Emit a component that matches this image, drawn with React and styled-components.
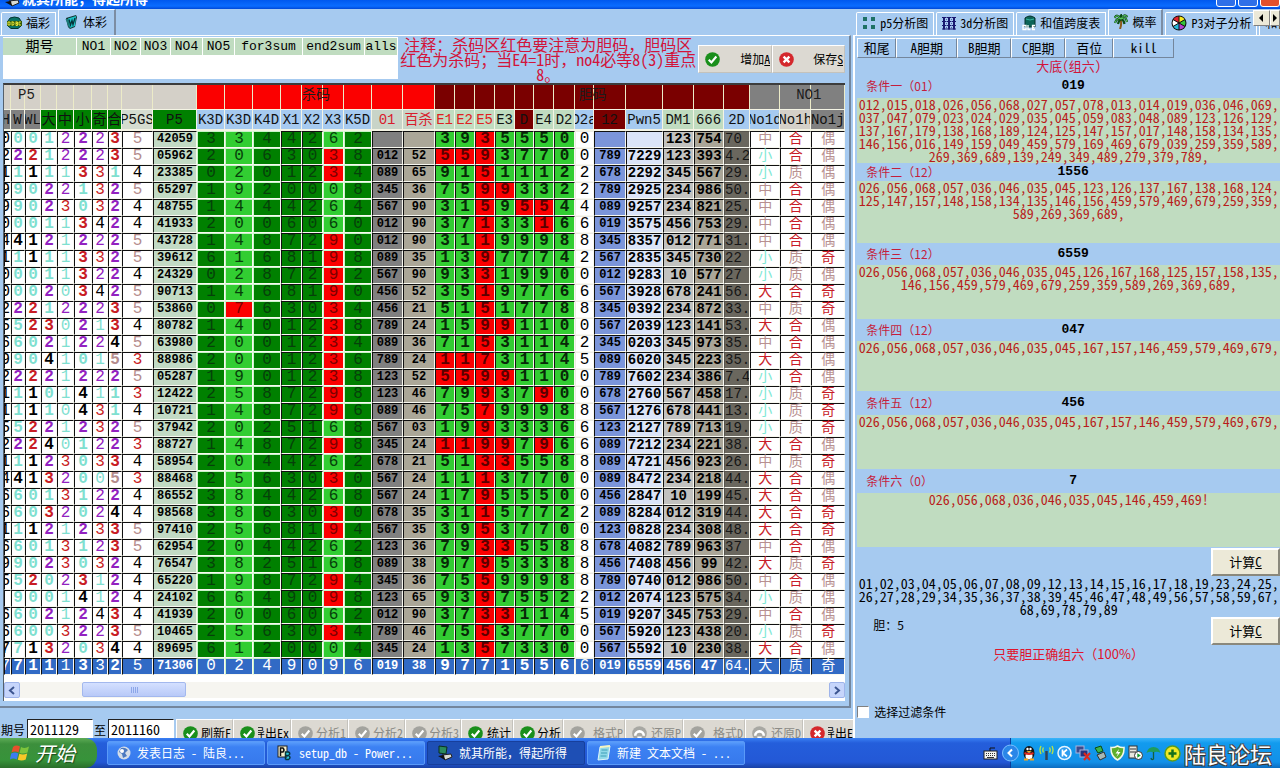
import React from 'react';
import styled, { createGlobalStyle, css } from 'styled-components';

const Global = createGlobalStyle`
  *, *::before, *::after { box-sizing: border-box; }
  body { margin: 0; background: #a6caf0; }
  button, input { font: inherit; color: inherit; margin: 0; padding: 0; border-radius: 0; }
`;

const mono = '"Liberation Mono", "Noto Sans CJK SC", monospace';
const song = '"Noto Sans CJK SC", "Noto Sans", sans-serif';

const Shell = styled.div`
  min-height: 100vh;
  display: flex;
  flex-direction: column;
  overflow: hidden;
  background: #a6caf0;
  color: #000;
  font: 12px/16px ${song};
  font-feature-settings: "hwid";
`;
const Full = styled.span`
  font-feature-settings: normal;
`;

/* ---------- title bar ---------- */
const TitleBar = styled.header`
  height: 9px;
  flex: none;
  display: flex;
  align-items: flex-end;
  gap: 2px;
  padding: 0 0 2px 4px;
  overflow: hidden;
  background: linear-gradient(#0058ee, #0a6cff 6px, #0048d8);
  color: #fff;
`;
const Title = styled.h1`
  margin: 0;
  flex: 1;
  font-size: 14px;
  line-height: 18px;
  font-weight: 700;
  font-feature-settings: normal;
`;
const WinButton = styled.button`
  flex: none;
  width: 20px;
  height: 20px;
  border: 1px solid #fff;
  border-radius: 3px;
  background: ${(p) => (p.$close ? '#e2502c' : '#2f6fe8')};
`;

/* ---------- layout ---------- */
const Main = styled.main`
  flex: 1;
  display: grid;
  grid-template-columns: minmax(0, 2fr) minmax(0, 1fr);
`;
const Left = styled.section`
  display: flex;
  flex-direction: column;
  min-width: 0;
`;
const Right = styled.section`
  display: flex;
  flex-direction: column;
  min-width: 0;
`;
const TabRow = styled.div`
  height: 26px;
  flex: none;
  display: flex;
  align-items: flex-end;
  gap: 2px;
  padding-left: ${(p) => p.$inset || 1}px;
  overflow: hidden;
`;
const Tab = styled.button`
  height: ${(p) => (p.$active ? 26 : 23)}px;
  flex: none;
  display: flex;
  align-items: center;
  gap: 4px;
  padding: 0 ${(p) => p.$end || 5}px 2px 5px;
  background: #a6caf0;
  border: solid #fff;
  border-width: 1px 1px 0 1px;
  border-top-left-radius: 2px;
  white-space: nowrap;
  ${(p) => p.$active && css`border-right: 2px solid #7c8da3;`}
`;
const Page = styled.div`
  flex: 1;
  display: flex;
  flex-direction: column;
  margin-right: 2px;
  padding: 1px 4px 5px 3px;
  border-top: 1px solid #fff;
  border-right: 2px solid #74869c;
  border-bottom: 2px solid #74869c;
`;

/* ---------- top strip ---------- */
const TopStrip = styled.div`
  height: 46px;
  display: flex;
`;
const SumTable = styled.table`
  width: 395px;
  height: 42px;
  table-layout: fixed;
  border-collapse: separate;
  border-spacing: 0;
  background: #fff;
  font: 13px/16px ${mono};
  th {
    height: 19px;
    padding: 0;
    font-weight: 400;
    background: #c0dcc0;
    border: solid #fff;
    border-width: 1px 1px 1px 0;
    overflow: hidden;
    white-space: nowrap;
  }
  th:first-child { font-size: 14px; }
  td { padding: 0; }
`;
const Note = styled.p`
  flex: 1;
  margin: 0;
  text-align: center;
  white-space: nowrap;
  font-size: 16px;
  line-height: 15px;
  color: #d2143a;
`;
const ActionRow = styled.div`
  display: flex;
  padding-top: 8px;
`;
const ToolButton = styled.button`
  width: ${(p) => p.$w}px;
  height: 28px;
  flex: none;
  display: flex;
  align-items: center;
  gap: 3px;
  padding: 0 1px 0 6px;
  background: #dcd9d2;
  border: 1px solid;
  border-color: #fff #c4c2bc #c4c2bc #fff;
  color: ${(p) => (p.disabled ? '#8b8b86' : '#000')};
  svg { flex: none; }
`;
const ToolLabel = styled.span`
  flex: 1;
  min-width: 0;
  display: flex;
  justify-content: flex-end;
  overflow: hidden;
  white-space: nowrap;
`;

/* ---------- data grid ---------- */
const Frame = styled.div`
  flex: 1;
  overflow: hidden;
  border-left: 1px solid #55606c;
  border-top: 2px solid #3c3c3c;
  background: #fff;
`;
const Grid = styled.table`
  width: 841px;
  table-layout: fixed;
  border-collapse: separate;
  border-spacing: 0;
  font: 14px/14px ${mono};
`;
const GroupHead = styled.th`
  height: 24px;
  padding: 0 0 4px ${(p) => p.$indent || 0}px;
  font-weight: 400;
  text-align: ${(p) => (p.$indent ? 'left' : 'center')};
  color: #1c1c1c;
  background-color: ${(p) => p.$bg};
  background-image: ${(p) => p.$lines.map(() => 'linear-gradient(#ecebc8, #ecebc8)').join(', ')};
  background-position: ${(p) => p.$lines.map((x) => `${x}px 0`).join(', ')};
  background-size: 1px 100%;
  background-repeat: no-repeat;
`;
const Clip = styled.span`
  display: flex;
  justify-content: ${(p) => p.$at || 'center'};
  overflow-x: clip;
  white-space: nowrap;
`;
const ColHead = styled.th`
  height: 22px;
  padding: 0;
  font-size: 14px;
  line-height: 18px;
  font-weight: 400;
  border: solid #f4f4e4;
  border-width: 1px 1px 2px 0;
  background: ${(p) => p.$bg};
  color: ${(p) => p.$fg};
`;
const Cell = styled.td`
  height: 17px;
  padding: 0;
  line-height: 15px;
  border: 1px solid #fff;
  border-color: ${(p) => (p.$soft ? '#c8f4c8' : p.$edge || '#101010')} #f8f8f0 #f8f8f0
    ${(p) => (p.$soft ? '#c8f4c8' : p.$edge || '#101010')};
  background: ${(p) => p.$bg};
  color: ${(p) => p.$fg};
  font-size: ${(p) => p.$size}px;
  font-weight: ${(p) => (p.$bold ? 700 : 400)};
`;
const ScrollBar = styled.div`
  height: 16px;
  margin-top: 7px;
  display: flex;
  background: #f6f5f0;
`;
const ScrollArrow = styled.button`
  width: 16px;
  display: grid;
  place-items: center;
  border: 1px solid #9fb4ea;
  border-radius: 2px;
  background: #c6d5fb;
`;
const Track = styled.div`
  flex: 1;
  padding-left: 62px;
`;
const Thumb = styled.div`
  width: 104px;
  height: 15px;
  display: flex;
  justify-content: center;
  align-items: center;
  gap: 1px;
  background: linear-gradient(#d4e0ff, #b8c9f8);
  border: 1px solid #a3b8ee;
  border-radius: 2px;
  i { width: 1px; height: 6px; background: #8ca6e8; }
`;

/* ---------- bottom toolbar ---------- */
const BottomBar = styled.form`
  height: 19px;
  margin-top: 11px;
  display: flex;
  align-items: flex-start;
  overflow: hidden;
  label { padding: 3px 2px 0 1px; flex: none; }
`;
const IssueInput = styled.input`
  width: 66px;
  height: 24px;
  flex: none;
  padding: 0 0 4px 2px;
  border: 1px solid;
  border-color: #222 #fff #fff #222;
  background: #fff;
  font-size: 14px;
  font-feature-settings: "hwid";
`;
const Tools = styled.div`
  display: flex;
  margin-left: 2px;
`;

/* ---------- right pane ---------- */
const RightPage = styled.div`
  flex: 1;
  display: flex;
  flex-direction: column;
  padding: 2px 0 0 2px;
  border-left: 2px solid #fff;
  border-top: 1px solid #fff;
`;
const TabStrip = styled.div`
  position: relative;
`;
const Spinner = styled.div`
  position: absolute;
  right: 0;
  top: 1px;
  display: flex;
`;
const SpinButton = styled.button`
  width: ${(p) => p.$w}px;
  height: 16px;
  display: grid;
  place-items: center;
  border: 1px solid;
  border-color: #fff #808080 #808080 #fff;
  background: #ece9d8;
`;
const SubTabs = styled.nav`
  display: flex;
  height: 20px;
`;
const SubTab = styled.button`
  width: ${(p) => p.$w}px;
  flex: none;
  font-size: 13px;
  line-height: 16px;
  background: #a6caf0;
  border: 1px solid;
  border-color: #fff #74869c #74869c #fff;
`;
const Caption = styled.h2`
  margin: 0;
  height: 16px;
  text-align: center;
  font-size: 13px;
  line-height: 16px;
  font-weight: 400;
  color: #d2143a;
`;
const CondHead = styled.h3`
  height: ${(p) => p.$h}px;
  margin: 0;
  padding-left: 9px;
  display: grid;
  grid-template-columns: 1fr auto 1fr;
  align-items: center;
  font-size: 12px;
  line-height: 16px;
  font-weight: 400;
  color: #c41e3c;
  b { font: 700 13px/14px ${mono}; color: #000; }
`;
const CondBody = styled.p`
  height: ${(p) => p.$h}px;
  margin: 0;
  background: #c0dcc0;
  text-align: center;
  font-size: 14px;
  line-height: 13px;
  color: #b81c1c;
`;
const CalcRow = styled.div`
  display: flex;
  justify-content: space-between;
  align-items: flex-start;
  padding: 1px 0 1px 16px;
`;
const CalcButton = styled.button`
  width: 69px;
  height: 28px;
  margin-left: auto;
  font-size: 13px;
  line-height: 16px;
  background: #ece9d8;
  border: 2px solid;
  border-color: #fff #8a887c #8a887c #fff;
`;
const PairList = styled.p`
  margin: 0;
  text-align: center;
  font-size: 14px;
  line-height: 13px;
`;
const Hint = styled.p`
  margin: 0;
  text-align: center;
  font-size: 13px;
  line-height: 16px;
  font-feature-settings: normal;
  color: #e0142c;
`;
const CheckLabel = styled.label`
  display: flex;
  align-items: center;
  gap: 5px;
  margin-top: 42px;
`;
const Check = styled.input`
  appearance: none;
  width: 12px;
  height: 12px;
  border: 1px solid;
  border-color: #808080 #fff #fff #808080;
  background: #fff;
`;

/* ---------- taskbar ---------- */
const TaskBar = styled.footer`
  height: 30px;
  flex: none;
  display: flex;
  align-items: stretch;
  background: linear-gradient(#3a80f4, #245edb 5px, #2358d6 24px, #1941a5);
  color: #fff;
`;
const Start = styled.button`
  width: 97px;
  flex: none;
  display: flex;
  align-items: center;
  gap: 5px;
  padding-left: 10px;
  margin-right: 10px;
  border: 0;
  border-radius: 0 12px 12px 0;
  background: linear-gradient(#5eac56, #3c8f3c 6px, #37933a 22px, #2a6e2a);
  font-size: 20px;
  line-height: 24px;
  font-style: italic;
  text-shadow: 1px 1px 1px #1c4a1c;
`;
const Task = styled.button`
  flex: 0 1 158px;
  min-width: 0;
  height: 24px;
  display: flex;
  align-items: center;
  gap: 6px;
  margin: 3px 2px 0 0;
  padding-left: 9px;
  border: 1px solid ${(p) => (p.$active ? '#173f9c' : '#5a9af8')};
  border-radius: 2px;
  background: ${(p) => (p.$active ? '#1e4fb5' : 'linear-gradient(#5a9dfb, #3c81f3 5px, #3779ec)')};
  white-space: nowrap;
  overflow: hidden;
  svg { flex: none; }
`;
const InputMethod = styled.div`
  margin-left: auto;
  padding: 0 12px 0 0;
  display: flex;
  align-items: center;
`;
const Tray = styled.div`
  display: flex;
  align-items: center;
  gap: 3px;
  padding-right: 8px;
  border-left: 1px solid #0a3c9a;
  background: linear-gradient(#3cb4fa, #129bee 5px, #1290e8 24px, #0c6cc0);
  svg { flex: none; }
  svg:first-child { margin-left: -9px; }
`;
const Watermark = styled.strong`
  font-size: 22px;
  line-height: 28px;
  font-weight: 400;
  white-space: nowrap;
  color: #fff;
  text-shadow: 1px 1px 0 #333, -1px -1px 0 #555, 1px -1px 0 #444, -1px 1px 0 #444;
`;

/* ---------- icons ---------- */
const OkIcon = ({ off }) => (
  <svg width="15" height="15" viewBox="0 0 14 14">
    <circle cx="7" cy="7" r="6.8" fill={off ? '#a3a39e' : '#1a8f1c'} />
    <path d="M3.5 7.2 L6 9.8 L10.6 4.2" fill="none" stroke="#fff" strokeWidth="2" />
  </svg>
);
const NoIcon = () => (
  <svg width="15" height="15" viewBox="0 0 14 14">
    <circle cx="7" cy="7" r="6.8" fill="#d4282c" />
    <path d="M4.300 4.300 L9.700 9.700 M9.700 4.300 L4.300 9.700" stroke="#fff" strokeWidth="2.2" />
  </svg>
);
const UndoIcon = () => (
  <svg width="15" height="15" viewBox="0 0 14 14">
    <circle cx="7" cy="7" r="6.8" fill="#a8a8a3" />
    <path d="M3 9 A4 4 0 0 1 11 9 M5 11 L9 11" fill="none" stroke="#fff" strokeWidth="2.4" />
  </svg>
);
const OdbcIcon = () => (
  <svg width="15" height="14" viewBox="0 0 15 14">
    <path d="M3 2 Q7.5 0 12 2 L14 5 V10 L11 12.500 H4 L1 10 V5 Z" fill="#0a7466" stroke="#02352f" />
    <rect x="0" y="5" width="15" height="5" fill="#31590e" />
    <path d="M1 6h2v3h-2z M5 5.500v4 M5 6h1.500l.5 1.500-.5 1.500h-1.500 M9 5.500v4 M9 6h1.500v1.500h-1.500 M10.500 7.500v2h-1.500 M14 6h-2v3h2" fill="none" stroke="#f4f03c" strokeWidth=".9" />
  </svg>
);
const BookIcon = () => (
  <svg width="15" height="16" viewBox="0 0 15 16">
    <path d="M2 4 L12 1 L13 3 L11 13 L6 15 L4 13 Z" fill="#11332f" />
    <path d="M1.500 5 L4 5 L6 14 L4.500 13 Z" fill="#1d7c78" />
    <path d="M4 4.500 L12 2 L11 12 L6 14 Z" fill="#1cc4c8" />
    <path d="M5 5.500 L6.500 11 L8 6.500 L9 10.500 L11 4" fill="none" stroke="#04343a" strokeWidth="1.300" />
  </svg>
);
const SquaresIcon = () => (
  <svg width="14" height="14" viewBox="0 0 14 14">
    <g fill="#1e7064"><rect x="1" y="1" width="4" height="4" /><rect x="9" y="1" width="4" height="4" /><rect x="1" y="9" width="4" height="4" /><rect x="9" y="9" width="4" height="4" /></g>
  </svg>
);
const MatrixIcon = () => (
  <svg width="14" height="14" viewBox="0 0 14 14">
    <path d="M0 1.500h14M0 5.500h14M0 9.500h14M0 13h14" stroke="#191970" />
    <path d="M2 1v12.500M7 1v12.500M12 1v12.500" stroke="#191970" strokeWidth="2" />
    <path d="M4.500 1v12M9.500 1v12" stroke="#5c66b4" strokeDasharray="1 1" />
  </svg>
);
const OleIcon = () => (
  <svg width="14" height="16" viewBox="0 0 14 16">
    <path d="M3 3 Q8 -1 13 3 V12 H3 Z" fill="#0d6458" stroke="#04302b" />
    <path d="M4 4 Q8 6 12 4" fill="none" stroke="#38b8a4" />
    <path d="M1 10.500h3v4h-3z M6 10v4.500h2.500 M13 10.500h-2.500v4h2.500 M10.500 12.500h2" fill="none" stroke="#fff" strokeWidth="1.300" />
  </svg>
);
const PalmIcon = () => (
  <svg width="14" height="15" viewBox="0 0 14 15">
    <path d="M6.500 5 Q8 10 6 15" fill="none" stroke="#8a5a1c" strokeWidth="2" />
    <path d="M7 5 Q3 -1 0.500 4 M7 5 Q3 3 1 9 M7 5 Q5 6 4 10 M7 5 Q10 -1 13.500 3 M7 5 Q12 2 13 8 M7 5 Q10 6 10.500 10 M7 5 Q6 1 8 1" fill="none" stroke="#0b4c14" strokeWidth="2.200" />
    <path d="M7 5 Q3 -1 0.500 4 M7 5 Q3 3 1 9 M7 5 Q10 -1 13.500 3 M7 5 Q12 2 13 8" fill="none" stroke="#5cc864" />
  </svg>
);
const WheelIcon = () => (
  <svg width="16" height="16" viewBox="0 0 16 16">
    <circle cx="8" cy="8" r="7.500" fill="#111" />
    <path d="M8 8 V1.500 A6.500 6.500 0 0 1 13.600 4.800 Z" fill="#f6e91c" />
    <path d="M8 8 L13.600 4.800 A6.500 6.500 0 0 1 13.600 11.200 Z" fill="#35c23a" />
    <path d="M8 8 L13.600 11.200 A6.500 6.500 0 0 1 8 14.500 Z" fill="#b43cd0" />
    <path d="M8 8 V14.500 A6.500 6.500 0 0 1 2.400 11.200 Z" fill="#27b8d8" />
    <path d="M8 8 L2.400 11.200 A6.500 6.500 0 0 1 2.400 4.800 Z" fill="#fff" />
    <path d="M8 8 L2.400 4.800 A6.500 6.500 0 0 1 8 1.500 Z" fill="#e4202c" />
    <path d="M8 1V15M2 4.500L14 11.500M14 4.500L2 11.500" stroke="#111" />
  </svg>
);
const Chevron = ({ d }) => (
  <svg width="8" height="9" viewBox="0 0 8 9"><path d={d} fill="none" stroke="#3c5590" strokeWidth="2" /></svg>
);
const Triangle = ({ d }) => (
  <svg width="5" height="8" viewBox="0 0 5 8"><path d={d} fill="#000" /></svg>
);
const WindowsFlag = () => (
  <svg width="20" height="18" viewBox="0 0 20 18">
    <path d="M3 3 Q6 0.500 10 2.500 L8.500 8.500 Q5 6.500 1.500 8.500 Z" fill="#e8502c" />
    <path d="M11 3 Q15 5 19 2.500 L17.500 8.500 Q13 10.500 9.500 8.700 Z" fill="#7cc43c" />
    <path d="M1.200 9.500 Q5 7.500 8.300 9.500 L6.800 15.500 Q3 13.500 -0.200 15.500 Z" fill="#3c7cf0" />
    <path d="M9.300 9.800 Q13 11.500 17.200 9.500 L15.700 15.500 Q12 17.500 7.800 15.800 Z" fill="#f8c828" />
  </svg>
);
const GlobeIcon = () => (
  <svg width="14" height="14" viewBox="0 0 14 14">
    <circle cx="7" cy="7" r="6.500" fill="#d4dde8" /><path d="M4 2 Q8 1 11 4 L8 7 L10 10 L6 12 L5 8 L2 6 Z" fill="#4b79c0" /><circle cx="5" cy="5" r="2" fill="#fff" />
  </svg>
);
const PbIcon = () => (
  <svg width="16" height="16" viewBox="0 0 16 16">
    <rect x="1" y="1" width="9" height="11" fill="#f4f0d0" stroke="#222" />
    <path d="M3.500 11V3h2.500q2 2 0 4h-2.500" fill="none" stroke="#111" strokeWidth="1.500" />
    <path d="M8.500 14.500V7h3q2.500 1.500 0 3.500h-3 M11.500 10.500q3 2 0 4h-3" fill="#2cc8d8" stroke="#06363c" strokeWidth="1.500" />
  </svg>
);
const AppIcon = () => (
  <svg width="16" height="16" viewBox="0 0 16 16">
    <path d="M2 1 L10 2 L9 9 L2 8 Z" fill="#2a8a5c" stroke="#0b2f20" /><path d="M5 10 L14 9 L15 12 L8 15 Z" fill="#d8dcd4" stroke="#222" /><path d="M1 11 L7 10 L8 15 Z" fill="#111" />
  </svg>
);
const NoteIcon = () => (
  <svg width="14" height="16" viewBox="0 0 14 16">
    <path d="M3 2 L13 1 L11 14 L1 15 Z" fill="#8fd8e8" stroke="#dff6fa" /><path d="M4.500 5h6M4 8h6M3.500 11h6" stroke="#3f9fb8" /><path d="M3 2 L13 1" stroke="#f4f4c0" strokeWidth="2" />
  </svg>
);
const KeyboardIcon = () => (
  <svg width="15" height="16" viewBox="0 0 15 16">
    <rect x="1" y="6" width="13" height="8" fill="#f4f4f0" stroke="#222" /><path d="M3 8.500h9M3 10.500h9" stroke="#333" strokeDasharray="1 1" /><path d="M4 12.500h7" stroke="#333" /><path d="M7 6V3h5" fill="none" stroke="#111" />
  </svg>
);
const BackIcon = () => (
  <svg width="17" height="18" viewBox="0 0 17 18">
    <circle cx="8.500" cy="9" r="8" fill="#2a86e8" stroke="#7cc0ff" /><path d="M10 5.500 L6.500 9 L10 12.500" fill="none" stroke="#fff" strokeWidth="2" />
  </svg>
);
const PenguinIcon = () => (
  <svg width="14" height="16" viewBox="0 0 14 16">
    <ellipse cx="7" cy="8" rx="5.500" ry="7" fill="#151515" /><ellipse cx="7" cy="11" rx="3.500" ry="3.500" fill="#fff" /><circle cx="5.500" cy="4" r="1.200" fill="#fff" /><circle cx="8.500" cy="4" r="1.200" fill="#fff" /><path d="M4 6h6l-3 1.500z" fill="#f8b020" /><path d="M2.500 8 Q7 10 11.500 8" fill="none" stroke="#e0281c" strokeWidth="2" /><path d="M2 14.500h4M8 14.500h4" stroke="#f8a81c" strokeWidth="2" />
  </svg>
);
const AntennaIcon = () => (
  <svg width="15" height="16" viewBox="0 0 15 16">
    <path d="M7.500 6V15" stroke="#345" strokeWidth="2.500" /><path d="M4.500 2.500q-1.500 2.500 0 5M2 1q-2 4 0 8M10.500 2.500q1.500 2.500 0 5M13 1q2 4 0 8" fill="none" stroke="#b4e04c" strokeWidth="1.400" />
  </svg>
);
const KIcon = () => (
  <svg width="15" height="16" viewBox="0 0 15 16">
    <circle cx="7.500" cy="8" r="6.500" fill="#2c9cf0" stroke="#e4f4ff" strokeWidth="1.500" /><path d="M5.500 4.500v7M10 4.500L6 8l4 3.500" fill="none" stroke="#fff" strokeWidth="1.700" />
  </svg>
);
const NetOffIcon = () => (
  <svg width="16" height="16" viewBox="0 0 16 16">
    <rect x="1" y="1" width="8" height="7" fill="#3c4a8c" stroke="#aab4dc" /><rect x="5" y="5" width="8" height="7" fill="#26347c" stroke="#aab4dc" /><path d="M9 8L15 15M15 8L9 15" stroke="#e0281c" strokeWidth="2" />
  </svg>
);
const PlugIcon = () => (
  <svg width="13" height="16" viewBox="0 0 13 16">
    <path d="M1 3L7 1L9 6L4 8Z" fill="#3cb44c" stroke="#0b4c14" /><path d="M3 10L10 7L12 12L6 15Z" fill="#a8b8b4" stroke="#333" />
  </svg>
);
const ShieldIcon = () => (
  <svg width="15" height="16" viewBox="0 0 15 16">
    <path d="M7.500 1 Q11 3 14 2.500 Q14.500 11 7.500 15 Q0.500 11 1 2.500 Q4 3 7.500 1Z" fill="#5fae2c" stroke="#f4f8e8" strokeWidth="1.500" /><path d="M9 4L5.500 8.500H8L6.500 12L10.500 7H8Z" fill="#fff" />
  </svg>
);
const ServerIcon = () => (
  <svg width="15" height="16" viewBox="0 0 15 16">
    <rect x="1" y="1" width="8" height="12" fill="#e8e8e0" stroke="#333" /><path d="M2 4h6M2 7h6" stroke="#333" /><circle cx="10.500" cy="10.500" r="4" fill="#fff" stroke="#333" /><path d="M9.300 8.300L12.800 10.500L9.300 12.700Z" fill="#149a2c" />
  </svg>
);
const UmbrellaIcon = () => (
  <svg width="15" height="16" viewBox="0 0 15 16">
    <path d="M0.500 8 Q2 2 7.500 2 Q13 2 14.500 8 Q11 6 7.500 7.500 Q4 6 0.500 8Z" fill="#1e9c5c" /><path d="M7.500 7V14q-2 1.500-2.500-1" fill="none" stroke="#14603c" strokeWidth="1.300" />
  </svg>
);
const PlusIcon = () => (
  <svg width="17" height="17" viewBox="0 0 17 17">
    <circle cx="8.500" cy="8.500" r="7.500" fill="#f0e824" stroke="#5c9c1c" strokeWidth="1.500" /><path d="M8.500 4.500v8M4.500 8.500h8" stroke="#14701c" strokeWidth="2.500" />
  </svg>
);

/* ---------- data ---------- */
const GREEN = '#008000';
const LIME = '#32cd32';
const RED = '#fb0000';
const MAROON = '#7a0000';
const SKY = '#a6caf0';
const MINT = '#c0dcc0';
const GREY = '#808080';

// tint: how the digit colour follows its value
const columns = [
  { t: 'H', w: 7, head: GREY, kind: 'plain', at: 'flex-end' },
  { t: 'W', w: 14, head: GREY, kind: 'tint', bold: true },
  { t: 'WL', w: 16, head: GREY, kind: 'tintRed', bold: true },
  { t: '大', w: 16, head: GREEN, kind: 'tint', bold: true },
  { t: '中', w: 17, head: GREEN, kind: 'tint' },
  { t: '小', w: 18, head: GREEN, kind: 'tint', bold: true },
  { t: '奇', w: 16, head: GREEN, kind: 'tint' },
  { t: '合', w: 14, head: GREEN, kind: 'tint', bold: true },
  { t: 'P5GS', w: 31, head: '#d4dcd0', kind: 'tint' },
  { t: 'P5', w: 44, head: GREEN, bg: '#c2dac4', bold: true, size: 12 },
  { t: 'K3D', w: 28, head: SKY, kind: 'kill', bg: GREEN, soft: true },
  { t: 'K3D', w: 28, head: SKY, kind: 'kill', bg: LIME, soft: true },
  { t: 'K4D', w: 28, head: SKY, kind: 'kill', bg: GREEN, soft: true },
  { t: 'X1', w: 21, head: SKY, kind: 'kill', bg: GREEN },
  { t: 'X2', w: 21, head: SKY, kind: 'kill', bg: GREEN },
  { t: 'X3', w: 21, head: SKY, kind: 'kill', bg: LIME, soft: true },
  { t: 'K5D', w: 28, head: SKY, kind: 'kill', bg: GREEN, soft: true },
  { t: '01', w: 31, head: '#c8d4c8', fg: '#d81c2c', bg: GREY, bold: true, size: 12 },
  { t: '百杀', w: 32, head: '#c8d4c8', fg: '#d81c2c', bg: '#aba798', bold: true, size: 12 },
  { t: 'E1', w: 20, head: MINT, fg: '#e02020', kind: 'gall' },
  { t: 'E2', w: 20, head: MINT, fg: '#e02020', kind: 'gall' },
  { t: 'E5', w: 20, head: MINT, fg: '#e02020', kind: 'gall' },
  { t: 'E3', w: 20, head: MINT, kind: 'gall' },
  { t: 'D', w: 19, head: MAROON, kind: 'gall' },
  { t: 'E4', w: 20, head: MINT, kind: 'gall' },
  { t: 'D2', w: 21, head: MINT, kind: 'gall' },
  { t: 'D2a', w: 19, head: SKY, kind: 'plain', edge: '#ecece4' },
  { t: '12', w: 32, head: MAROON, bg: '#7b95da', bold: true, size: 12 },
  { t: 'Pwn5', w: 37, head: SKY, bg: '#dbe4f8', bold: true, size: 14 },
  { t: 'DM1', w: 31, head: MINT, bg: '#c2c2c0', bold: true, size: 14 },
  { t: '666', w: 30, head: MINT, bg: '#aaa698', bold: true, size: 14 },
  { t: '2D', w: 26, head: SKY, bg: '#6a675e', size: 14, at: 'flex-start', headAt: 'center', edge: '#56534c' },
  { t: 'No1d', w: 30, head: SKY, kind: 'word' },
  { t: 'No1h', w: 31, head: '#d4d0c8', kind: 'word' },
  { t: 'No1j', w: 34, head: GREY, kind: 'word' },
];

const groups = [
  { t: 'P5', from: 0, to: 10, bg: '#d4d0c8', indent: 14 },
  { t: '杀码', from: 10, to: 19, bg: RED },
  { t: '胆码', from: 19, to: 32, bg: MAROON },
  { t: 'NO1', from: 32, to: 35, bg: GREY, indent: 46 },
];

// digits | P5 | kill digits | 01 | 百杀 | gall digits | 12 | Pwn5 | DM1 | 666 | 2D | words ; "!" marks a red cell
const source = `
000122235|42059|3344262|||39355500|||123|754|70|中合偶
222122235|05962|2063038|012|52|5!5!937700|789|7229|123|393|4.2|小合偶
111113314|23385|0201234|089|65|91511122|678|2292|345|567|29.|小质偶
990221325|65297|1920008|345|36|7599!3322|789|2925|234|986|50.|中合偶
990230324|48755|1444264|567|90|31595!5!44|089|9257|234|821|25.|中合偶
000113424|41933|2006060|012|90|371331!66|019|3575|456|753|29.|中合偶
441212225|43728|1487290|012|90|31199988|345|8357|012|771|31.|中合偶
111113325|39612|6168198|089|35|13977742|567|2835|345|730|22|小质奇
000113224|24329|0287292|567|90|93319900|012|9283|10|577|27|小质偶
000203425|90713|1468190|456|52|35197766|567|3928|678|241|56.|大合奇
222122235|53860|07!63034|456|21|51517788|345|0392|234|872|33.|中质奇
552302134|80782|1401238|789|24|1599!1100|567|2039|123|141|53.|大合偶
660212245|63980|2001234|089|36|71531142|345|0203|345|973|35.|中合偶
990410153|88986|2001236|789|24|1!1!731145|089|6020|345|223|35.|大合偶
222212225|05287|1901238|123|52|5!5!99!1100|789|7602|234|386|7.4|小合偶
111014113|12422|2587298|123|46|799379!00|678|2760|567|458|17.|小质奇
111104314|10721|1487296|089|46|75799988|567|1276|678|441|13.|小质奇
552212325|37942|2025168|567|03|19933366|123|2127|789|713|19.|小质奇
222401223|88727|1487298|345|24|1!1!99!79!66|089|7212|234|221|38.|大合偶
111230334|58954|2044262|678|21|5133!5588|089|4721|456|923|26.|中质奇
441320053|88468|2563030|567|24|11137700|089|8472|234|218|44.|大合偶
660131224|86552|3844268|567|24|17955500|456|2847|10|199|45.|大合偶
660320244|98568|3863030|678|35|31157722|089|8284|012|319|44.|大合奇
111212335|97410|2568194|567|35|39537700|123|0828|234|308|48.|大合奇
660131235|62954|2044262|123|36|7933!5588|678|4082|789|963|37|中合偶
990230324|76547|3825168|089|38|97953388|456|7408|456|99|42.|大质奇
552023124|65220|1987294|345|36|75599988|789|0740|012|986|50.|中合偶
 90014124|24102|6649098|123|65|93975522|012|2074|123|575|34.|小质偶
660212434|41939|2006062|012|90|3733!1145|019|9207|345|753|29.|中合偶
660032235|10465|2563034|789|46|75537700|567|5920|123|438|20.|小质奇
771320344|89695|6120004|345|24|13573300|567|5592|10|230|38.|大合偶
771113325|71306|0249096|019|38|97715566|019|6559|456|47|64.|大质奇`;

const digits = (s) => s.match(/[\d ]!?/g) || [];
const rows = source.split('\n').filter(Boolean).map((line) => {
  const [a, p5, kill, o1, b, gall, c12, pwn, dm, six, d2, words] = line.split('|');
  return [...digits(a), p5, ...digits(kill), o1, b, ...digits(gall), c12, pwn, dm, six, d2, ...words];
});

const tints = { 0: '#7fe0d0', 1: '#7fe0d0', 9: '#7fe0d0', 6: '#7fe0d0', 7: '#7fe0d0', 2: '#9222c0', 3: '#c81c24', 4: '#000', 5: '#b48c8c' };
const words = { 中: '#b89090', 小: '#7fe8d4', 质: '#b89090', 偶: '#b89090', 大: '#c81c28', 合: '#c81c28', 奇: '#c81c28' };

function look(col, raw, selected) {
  const value = raw.replace('!', '').trim();
  const marked = raw.includes('!');
  let bg = col.bg || '#fff';
  let fg = '#000';
  let size = col.size || 16;
  let bold = col.bold;
  if (col.kind === 'tint') fg = col.t === 'W' && value === '5' ? tints[0] : tints[value];
  if (col.kind === 'tintRed') fg = value === '2' ? '#c81c24' : value === '1' ? '#000' : tints[0];
  if (col.kind === 'kill') {
    const hot = marked || (col.t === 'X3' && (value === '3' || value === '9'));
    if (hot) bg = RED;
    fg = hot ? '#7a0000' : '#06400a';
  }
  if (col.kind === 'gall') {
    bg = marked || col.t === 'E5' ? RED : LIME;
    fg = bg === RED ? '#5a0000' : '#082808';
    bold = true;
  }
  if (col.kind === 'word') {
    fg = words[value];
    size = 14;
  }
  if (col.t === '2D') fg = '#161616';
  if (selected) {
    bg = '#316ac5';
    fg = '#fff';
  }
  return { value, bg, fg, size, bold };
}

const linesOf = (g) => {
  let x = 0;
  return columns.slice(g.from, g.to).map((c) => (x += c.w) - 1);
};

const sumHeads = [['期号', 74], ['NO1', 34], ['NO2', 30], ['NO3', 30], ['NO4', 32], ['NO5', 32], ['for3sum', 68], ['end2sum', 62], ['alls', 33]];

const tools = [
  ['刷新F', 57, 'ok'], ['导出Ex', 58, 'ok'], ['分析1', 57, 'off'], ['分析2', 57, 'off'], ['分析3', 56, 'off'], ['统计', 52, 'ok'],
  ['分析', 50, 'ok'], ['格式P', 62, 'off'], ['还原P', 58, 'undo'], ['格式D', 62, 'off'], ['还原D', 58, 'undo'], ['导出E', 52, 'no'],
];

const conditions = [
  ['条件一（01）', '019', 24, 65, '012 015 018 026 056 068 027 057 078 013 014 019 036 046 069 037 047 079 023 024 029 035 045 059 083 048 089 123 126 129 137 167 179 138 168 189 124 125 147 157 017 148 158 134 135 146 156 016 149 159 049 459 579 169 469 679 039 259 359 589 269 369 689 139 249 349 489 279 379 789', ','],
  ['条件二（12）', '1556', 18, 62, '026 056 068 057 036 046 035 045 123 126 137 167 138 168 124 125 147 157 148 158 134 135 146 156 459 579 469 679 259 359 589 269 369 689', ','],
  ['条件三（12）', '6559', 22, 54, '026 056 068 057 036 046 035 045 126 167 168 125 157 158 135 146 156 459 579 469 679 259 359 589 269 369 689', ','],
  ['条件四（12）', '047', 22, 50, '026 056 068 057 036 046 035 045 167 157 146 459 579 469 679', ','],
  ['条件五（12）', '456', 24, 54, '026 056 068 057 036 046 035 045 167 157 146 459 579 469 679', ','],
  ['条件六（0）', '7', 24, 54, '026 056 068 036 046 035 045 146 459 469', '!'],
];
const pairs = '01 02 03 04 05 06 07 08 09 12 13 14 15 16 17 18 19 23 24 25 26 27 28 29 34 35 36 37 38 39 45 46 47 48 49 56 57 58 59 67 68 69 78 79 89';

const NumberRun = ({ list, end = '' }) => {
  const all = list.split(' ');
  return all.map((n, i) => (
    <React.Fragment key={n}>
      {n}{i < all.length - 1 ? ',' : end}<wbr />
    </React.Fragment>
  ));
};

const toolIcon = { ok: <OkIcon />, off: <OkIcon off />, undo: <UndoIcon />, no: <NoIcon /> };

function DataGrid() {
  return (
    <Grid>
      <colgroup>{columns.map((c, i) => <col key={i} width={c.w} />)}</colgroup>
      <thead>
        <tr>
          {groups.map((g) => (
            <GroupHead key={g.t} colSpan={g.to - g.from} $bg={g.bg} $indent={g.indent} $lines={linesOf(g)}>{g.t}</GroupHead>
          ))}
        </tr>
        <tr>
          {columns.map((c, i) => (
            <ColHead key={i} $bg={c.head} $fg={c.fg || '#111'}><Clip $at={c.headAt || c.at}>{c.t}</Clip></ColHead>
          ))}
        </tr>
      </thead>
      <tbody>
        {rows.map((r, y) => (
          <tr key={y}>
            {r.map((raw, x) => {
              const c = columns[x];
              const s = look(c, raw, y === rows.length - 1);
              return (
                <Cell key={x} $bg={s.bg} $fg={s.fg} $size={s.size} $bold={s.bold} $soft={c.soft} $edge={c.edge}>
                  <Clip $at={c.at}>{s.value}</Clip>
                </Cell>
              );
            })}
          </tr>
        ))}
      </tbody>
    </Grid>
  );
}

export default function App() {
  return (
    <Shell>
      <Global />
      <TitleBar>
        <AppIcon />
        <Title>就其所能，得起所得</Title>
        <WinButton aria-label="最小化" />
        <WinButton aria-label="还原" />
        <WinButton aria-label="关闭" $close />
      </TitleBar>
      <Main>
        <Left>
          <TabRow>
            <Tab><OdbcIcon />福彩</Tab>
            <Tab $active $end={7}><BookIcon />体彩</Tab>
          </TabRow>
          <Page>
            <TopStrip>
              <SumTable>
                <colgroup>{sumHeads.map(([t, w]) => <col key={t} width={w} />)}</colgroup>
                <thead><tr>{sumHeads.map(([t]) => <th key={t}>{t}</th>)}</tr></thead>
                <tbody><tr><td colSpan={9} /></tr></tbody>
              </SumTable>
              <Note>
                <Full>注释：杀码区红色要注意为胆码，胆码区</Full><br />
                <Full>红色为杀码；当</Full>E4=1<Full>时，</Full>no4必等8(3)重点<br />
                8<Full>。</Full>
              </Note>
              <ActionRow>
                <ToolButton $w={74}><OkIcon /><ToolLabel>增加<u>A</u></ToolLabel></ToolButton>
                <ToolButton $w={73}><NoIcon /><ToolLabel>保存<u>S</u></ToolLabel></ToolButton>
              </ActionRow>
            </TopStrip>
            <Frame>
              <DataGrid />
              <ScrollBar>
                <ScrollArrow aria-label="向左"><Chevron d="M6 1L2 4.500L6 8" /></ScrollArrow>
                <Track><Thumb><i /><i /><i /><i /></Thumb></Track>
                <ScrollArrow aria-label="向右"><Chevron d="M2 1L6 4.500L2 8" /></ScrollArrow>
              </ScrollBar>
            </Frame>
          </Page>
          <BottomBar>
            <label htmlFor="from">期号</label>
            <IssueInput id="from" defaultValue="2011129" />
            <label htmlFor="to">至</label>
            <IssueInput id="to" defaultValue="2011160" />
            <Tools>
              {tools.map(([t, w, k]) => (
                <ToolButton type="button" key={t} $w={w} disabled={k === 'off' || k === 'undo'}>
                  {toolIcon[k]}<ToolLabel>{t}</ToolLabel>
                </ToolButton>
              ))}
            </Tools>
          </BottomBar>
        </Left>
        <Right>
          <TabStrip>
            <TabRow $inset={3}>
              <Tab><SquaresIcon />p5分析图</Tab>
              <Tab><MatrixIcon />3d分析图</Tab>
              <Tab><OleIcon />和值跨度表</Tab>
              <Tab $active><PalmIcon />概率</Tab>
              <Tab><WheelIcon />P3对子分析</Tab>
              <Tab>和值</Tab>
            </TabRow>
            <Spinner>
              <SpinButton $w={17} aria-label="上一页"><Triangle d="M4 0L0 4L4 8Z" /></SpinButton>
              <SpinButton $w={10} aria-label="下一页"><Triangle d="M1 0L5 4L1 8Z" /></SpinButton>
            </Spinner>
          </TabStrip>
          <RightPage>
            <SubTabs>
              <SubTab $w={39}>和尾</SubTab>
              <SubTab $w={61}>A胆期</SubTab>
              <SubTab $w={54}>B胆期</SubTab>
              <SubTab $w={54}>C胆期</SubTab>
              <SubTab $w={48}>百位</SubTab>
              <SubTab $w={61}>kill</SubTab>
            </SubTabs>
            <Caption>大底(组六)</Caption>
            {conditions.map(([label, value, head, body, list, end]) => (
              <React.Fragment key={label}>
                <CondHead $h={head}><Full>{label}</Full><b>{value}</b></CondHead>
                <CondBody $h={body}><NumberRun list={list} end={end} /></CondBody>
              </React.Fragment>
            ))}
            <CalcRow><CalcButton>计算<u>C</u></CalcButton></CalcRow>
            <PairList><NumberRun list={pairs} /></PairList>
            <CalcRow><Full>胆：5</Full><CalcButton>计算<u>C</u></CalcButton></CalcRow>
            <Hint>只要胆正确组六（100%）</Hint>
            <CheckLabel><Check type="checkbox" />选择过滤条件</CheckLabel>
          </RightPage>
        </Right>
      </Main>
      <TaskBar>
        <Start><WindowsFlag />开始</Start>
        <Task><GlobeIcon />发表日志 - 陆良...</Task>
        <Task><PbIcon />setup_db - Power...</Task>
        <Task $active><AppIcon /><Full>就其所能，得起所得</Full></Task>
        <Task><NoteIcon />新建 文本文档 - ...</Task>
        <InputMethod><KeyboardIcon /></InputMethod>
        <Tray>
          <BackIcon /><PenguinIcon /><AntennaIcon /><KIcon /><NetOffIcon /><PlugIcon /><ShieldIcon /><ServerIcon /><UmbrellaIcon /><PlusIcon />
          <Watermark>陆良论坛</Watermark>
        </Tray>
      </TaskBar>
    </Shell>
  );
}
